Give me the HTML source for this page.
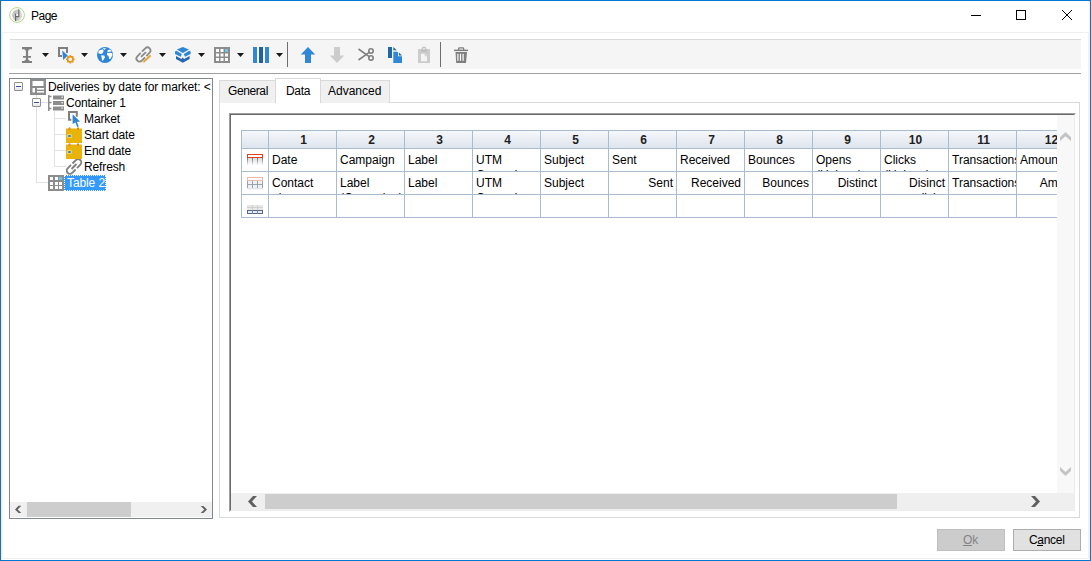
<!DOCTYPE html>
<html><head><meta charset="utf-8">
<style>
*{box-sizing:border-box}
html,body{margin:0;padding:0}
body{width:1091px;height:561px;position:relative;overflow:hidden;background:#fff;font-family:"Liberation Sans",sans-serif;font-size:12px;color:#000}
.a{position:absolute}
.t{position:absolute;white-space:pre;line-height:16px}
</style></head><body>
<!-- window border -->
<div class="a" style="left:0;top:0;width:1091px;height:1px;background:#0078d4"></div>
<div class="a" style="left:0;top:560px;width:1091px;height:1px;background:#0078d4"></div>
<div class="a" style="left:0;top:0;width:1px;height:561px;background:#2f6a9a"></div>
<div class="a" style="left:1090px;top:0;width:1px;height:561px;background:#1b6fc0"></div>
<!-- body frame -->
<div class="a" style="left:2px;top:32px;width:1087px;height:527px;border:1px solid #f0f0f0;border-left-color:#eef4fa"></div>
<div class="a" style="left:1px;top:1px;width:1px;height:559px;background:#e2f5fc"></div>
<div class="a" style="left:1089px;top:1px;width:1px;height:559px;background:#e8f7fc"></div>

<!-- title -->
<svg class="a" style="left:9px;top:7px" width="16" height="16" viewBox="0 0 16 16">
<circle cx="8" cy="8" r="7.4" fill="#fff" stroke="#b0da80" stroke-width="1"/>
<ellipse cx="8" cy="8.2" rx="4.8" ry="5.8" fill="#c6c6c6"/>
<path d="M8 2.6 A4.8 5.8 0 0 1 12.8 8.2 A4.8 5.8 0 0 1 10 13.5 Z" fill="#d8d8d8"/>
<rect x="7" y="6.8" width="2.4" height="2.4" fill="#fff"/>
<path d="M9.8 2.2 V9.6 H6.8 M6.6 6.4 V14" fill="none" stroke="#6b6b6b" stroke-width="1.2"/>
</svg>
<div class="t" style="left:31px;top:8px;letter-spacing:-0.5px">Page</div>
<div class="a" style="left:971px;top:15px;width:10px;height:1px;background:#000"></div>
<div class="a" style="left:1016px;top:10px;width:10px;height:10px;border:1px solid #000"></div>
<svg class="a" style="left:1061px;top:9px" width="12" height="12" viewBox="0 0 12 12"><path d="M1 1 L11 11 M11 1 L1 11" stroke="#000" stroke-width="1"/></svg>

<!-- toolbar -->
<div class="a" style="left:10px;top:39px;width:1071px;height:30px;background:#f5f5f5;border-top:1px solid #dadada"></div>
<!--TOOLBAR-->
<svg class="a" style="left:0;top:0" width="480" height="70" viewBox="0 0 480 70">
<!-- I-beam -->
<g fill="#7f7f7f">
<path d="M22 47 H32 V49.3 H30.2 Q28.4 49.5 28.1 51.3 V55.9 H31 V57.7 H28.1 V59 Q28.3 60.7 30.2 60.9 H32 V63 H22 V60.9 H23.8 Q25.7 60.7 25.9 59 V57.7 H23 V55.9 H25.9 V51.3 Q25.6 49.5 23.8 49.3 H22 Z"/>
</g>
<!-- dropdown arrows -->
<g fill="#1a1a1a">
<path d="M42 53 H49 L45.5 57 Z"/>
<path d="M81 53 H88 L84.5 57 Z"/>
<path d="M120 53 H127 L123.5 57 Z"/>
<path d="M159 53 H166 L162.5 57 Z"/>
<path d="M198 53 H205 L201.5 57 Z"/>
<path d="M237 53 H244 L240.5 57 Z"/>
<path d="M276 53 H283 L279.5 57 Z"/>
</g>
<!-- icon 2: select + gear -->
<path d="M62 56 H59 V48 H67 V53" fill="none" stroke="#7f7f7f" stroke-width="2"/>
<path d="M62.2 50.4 L67.8 55.4 L63.2 60 Z" fill="#2f86d6"/>
<g transform="translate(70.3 59.3)">
<circle r="2.7" fill="none" stroke="#e8961a" stroke-width="1.7"/>
<g stroke="#e8961a" stroke-width="1.5" stroke-linecap="butt">
<path d="M0 -4.3 V-2.5 M0 2.5 V4.3 M-4.3 0 H-2.5 M2.5 0 H4.3 M-3 -3 L-1.8 -1.8 M3 3 L1.8 1.8 M-3 3 L-1.8 1.8 M3 -3 L1.8 -1.8"/>
</g>
</g>
<!-- globe -->
<circle cx="105" cy="55" r="8" fill="#2f86d6"/>
<g fill="#fff">
<path d="M102.7 48.2 L106 48.2 L104.4 49.9 Z"/>
<path d="M98.8 50.4 L102.7 49.3 L103.7 51 L102.6 53.2 L100.9 54.1 L98.2 53.3 Z"/>
<path d="M101.2 55.2 L104.2 55.5 L105 57.3 L103.3 60.1 L102.4 60.9 L101.6 58 Z"/>
<path d="M107.5 50.2 L110.3 49.6 L111.7 51.6 L107.7 52 Z"/>
<path d="M106.9 52.8 L111.9 53.1 L112.6 55 L110.3 59.1 L109.3 59.1 L108.5 55.9 L107.1 55 Z"/>
</g>
<!-- link + pencil -->
<g transform="rotate(-45 143.5 54.5)" fill="none" stroke="#8a8a8a" stroke-width="1.8">
<path d="M142.6 51.4 H137.9 A3.1 3.1 0 0 0 137.9 57.6 H142.6"/>
<path d="M144.4 51.4 H149.1 A3.1 3.1 0 0 1 149.1 57.6 H144.4"/>
<path d="M140 54.5 H147"/>
</g>
<path d="M143.4 62 L150.6 55.4" stroke="#eba030" stroke-width="1.9"/>
<path d="M142.6 62.8 L143.6 61.8" stroke="#f6d49a" stroke-width="1.5"/>
<!-- box -->
<g fill="#2f86d6">
<path d="M176.8 49.6 L182.8 46.9 L189 49.6 L182.8 52.9 Z"/>
<path d="M175 51.5 L176.4 50.8 L181.8 54 L180.6 56.8 L175 53.9 Z"/>
<path d="M190.6 51.5 L189.2 50.8 L183.8 54 L185 56.8 L190.6 53.9 Z"/>
</g>
<path d="M176 56 L181.5 58.9 L182.8 57.4 L184.1 58.9 L189.6 56 V59 L182.8 62.8 L176 59 Z" fill="#2468b2"/>
<!-- grid icon -->
<rect x="214" y="47" width="16" height="16" fill="#8c8c8c"/>
<g fill="#fff">
<rect x="216" y="49" width="3" height="3"/><rect x="220.5" y="49" width="3" height="3"/>
<rect x="216" y="53.5" width="3" height="3"/><rect x="220.5" y="53.5" width="3" height="3"/><rect x="225" y="53.5" width="3" height="3"/>
<rect x="216" y="58" width="3" height="3"/><rect x="220.5" y="58" width="3" height="3"/><rect x="225" y="58" width="3" height="3"/>
</g>
<rect x="225" y="49" width="3" height="3" fill="#6cc3ec"/>
<!-- columns -->
<rect x="253" y="47" width="4" height="16" fill="#3087d5"/>
<rect x="259" y="47" width="4" height="16" fill="#23609f"/>
<rect x="265" y="47" width="4" height="16" fill="#3087d5"/>
<!-- separators -->
<rect x="287" y="42" width="1" height="25" fill="#6d6d6d"/>
<rect x="440" y="42" width="1" height="25" fill="#6d6d6d"/>
<!-- up arrow -->
<path d="M308 47 L315.2 54.5 H311 V63 H305 V54.5 H300.8 Z" fill="#3087d5"/>
<!-- down arrow -->
<path d="M337 63 L344.2 55.5 H340 V47 H334 V55.5 H329.8 Z" fill="#cccccc"/>
<!-- scissors -->
<g fill="none" stroke="#7f7f7f" stroke-width="1.6">
<circle cx="371" cy="51" r="2.2"/>
<circle cx="371" cy="58" r="2.2"/>
<path d="M358.5 49 L369.2 56.6 M358.5 60 L369.2 52.4"/>
</g>
<!-- copy -->
<rect x="388" y="47" width="4" height="11" fill="#2265a8"/>
<path d="M393.3 47 L396.8 50.3 H393.3 Z" fill="#2265a8"/>
<rect x="393.3" y="50.3" width="3.5" height="1.7" fill="#b4d8f4"/>
<path d="M393.3 52 H398 V56.2 H402 V63 H393.3 Z" fill="#3087d5"/>
<path d="M398.9 52.4 L402 55.4 H398.9 Z" fill="#2468b0"/>
<!-- paste disabled -->
<rect x="418" y="49" width="12" height="14" fill="#cccccc"/>
<path d="M422.3 50 V48.8 Q422.3 47.3 424 47.3 Q425.7 47.3 425.7 48.8 V50" fill="none" stroke="#c6c6c6" stroke-width="1.5"/>
<rect x="420.8" y="50" width="6.2" height="1.8" fill="#bdbdbd"/>
<path d="M421 53.8 H425 L427 55.8 V61.3 H421 Z" fill="#f4f4f4"/>
<path d="M425 53.8 V55.8 H427" fill="none" stroke="#cccccc" stroke-width="0.8"/>
<!-- trash -->
<g fill="#7f7f7f">
<path d="M458 50 V48.6 Q458 47.2 459.5 47.2 H462.8 Q464.3 47.2 464.3 48.6 V50 H462.9 V48.6 H459.4 V50 Z"/>
<rect x="454" y="49.6" width="14" height="1.5"/>
<path d="M455.5 52 H467 L466 63 H456.2 Z"/>
</g>
<g fill="#fff">
<rect x="457.3" y="53.8" width="1.2" height="7"/>
<rect x="459.9" y="53.8" width="1.2" height="7"/>
<rect x="462.5" y="53.8" width="1.2" height="7"/>
</g>
</svg>

<!--/TOOLBAR-->
<!-- separator -->
<div class="a" style="left:9px;top:73px;width:1072px;height:1px;background:#a0a0a0"></div>

<!-- tree panel -->
<div class="a" style="left:9px;top:78px;width:204px;height:441px;border:1px solid #828790;background:#fff"></div>
<!-- tree hscroll -->
<div class="a" style="left:10px;top:502px;width:202px;height:15px;background:#f0f0f0"></div>
<div class="a" style="left:27px;top:502px;width:104px;height:15px;background:#cdcdcd"></div>
<!--TREE-->
<!-- tree lines -->
<div class="a" style="left:36px;top:95px;width:1px;height:88px;background:#e2e2e2"></div>
<div class="a" style="left:37px;top:182px;width:11px;height:1px;background:#e2e2e2"></div>
<div class="a" style="left:41px;top:102px;width:7px;height:1px;background:#e2e2e2"></div>
<div class="a" style="left:54px;top:111px;width:1px;height:56px;background:#e2e2e2"></div>
<div class="a" style="left:55px;top:118px;width:11px;height:1px;background:#e2e2e2"></div>
<div class="a" style="left:55px;top:134px;width:11px;height:1px;background:#e2e2e2"></div>
<div class="a" style="left:55px;top:150px;width:11px;height:1px;background:#e2e2e2"></div>
<div class="a" style="left:55px;top:166px;width:11px;height:1px;background:#e2e2e2"></div>
<!-- expanders -->
<div class="a" style="left:14px;top:82px;width:9px;height:9px;border:1px solid #8e8f8f;border-radius:1px;background:linear-gradient(#fff 40%,#e4e4e4)"></div>
<div class="a" style="left:16px;top:86px;width:5px;height:1px;background:#3a4f9e"></div>
<div class="a" style="left:32px;top:98px;width:9px;height:9px;border:1px solid #8e8f8f;border-radius:1px;background:linear-gradient(#fff 40%,#e4e4e4)"></div>
<div class="a" style="left:34px;top:102px;width:5px;height:1px;background:#3a4f9e"></div>
<!-- icon 1: layout -->
<svg class="a" style="left:30px;top:79px" width="16" height="16" viewBox="0 0 16 16">
<rect x="0" y="0" width="16" height="16" fill="#8c8c8c"/>
<rect x="2.5" y="2" width="11" height="5" fill="#fff"/>
<rect x="2.5" y="9" width="2.5" height="4.5" fill="#fff"/>
<rect x="7" y="9" width="7" height="1.6" fill="#fff"/>
<rect x="7" y="12" width="7" height="1.6" fill="#fff"/>
</svg>
<div class="t" style="left:48px;top:79px;letter-spacing:-0.12px">Deliveries by date for market: &lt;</div>
<!-- icon 2: container -->
<svg class="a" style="left:48px;top:95px" width="16" height="16" viewBox="0 0 16 16">
<path d="M0.75 0 V16 M0.75 1.5 H3.5 M0.75 7.5 H3.5 M0.75 13.5 H3.5" stroke="#8c8c8c" stroke-width="1.5" fill="none"/>
<rect x="5" y="0.5" width="11" height="4" fill="#8c8c8c"/>
<rect x="5" y="6" width="11" height="4" fill="#8c8c8c"/>
<rect x="5" y="11.5" width="11" height="4" fill="#8c8c8c"/>
<rect x="13.5" y="1.5" width="1.3" height="1.3" fill="#fff"/>
<rect x="13.5" y="7" width="1.3" height="1.3" fill="#fff"/>
<rect x="13.5" y="12.5" width="1.3" height="1.3" fill="#fff"/>
</svg>
<div class="t" style="left:66px;top:95px;letter-spacing:-0.2px">Container 1</div>
<!-- icon 3: market -->
<svg class="a" style="left:66px;top:111px" width="16" height="16" viewBox="0 0 16 16">
<path d="M5.3 8.8 H3 V1 H10.8 V5.8" stroke="#7f7f7f" stroke-width="2" fill="none"/>
<path d="M6.6 3.2 L14 10.6 L10.9 10.9 L12.7 15.4 L11.2 16 L9.4 11.5 L6.6 13 Z" fill="#2f86d6"/>
</svg>
<div class="t" style="left:84px;top:111px;letter-spacing:-0.12px">Market</div>
<!-- icon 4,5: calendar -->
<svg class="a" style="left:66px;top:127px" width="16" height="16" viewBox="0 0 16 16">
<rect x="0" y="1.5" width="16" height="14.5" fill="#e8b40a"/>
<rect x="2.5" y="0.3" width="2" height="2.7" rx="1" fill="#d98b1c"/>
<rect x="11" y="0.3" width="2" height="2.7" rx="1" fill="#d98b1c"/>
<rect x="1.5" y="7.3" width="4" height="3.4" fill="#f5e6b0"/>
<rect x="2.3" y="8" width="2.4" height="2" fill="#2c7fc4"/>
</svg>
<div class="t" style="left:84px;top:127px;letter-spacing:-0.12px">Start date</div>
<svg class="a" style="left:66px;top:143px" width="16" height="16" viewBox="0 0 16 16">
<rect x="0" y="1.5" width="16" height="14.5" fill="#e8b40a"/>
<rect x="2.5" y="0.3" width="2" height="2.7" rx="1" fill="#d98b1c"/>
<rect x="11" y="0.3" width="2" height="2.7" rx="1" fill="#d98b1c"/>
<rect x="1.5" y="7.3" width="4" height="3.4" fill="#f5e6b0"/>
<rect x="2.3" y="8" width="2.4" height="2" fill="#2c7fc4"/>
</svg>
<div class="t" style="left:84px;top:143px;letter-spacing:-0.12px">End date</div>
<!-- icon 6: link -->
<svg class="a" style="left:66px;top:159px" width="16" height="16" viewBox="0 0 16 16">
<g transform="rotate(-45 8 7.5)" fill="none" stroke="#7f7f7f" stroke-width="1.9">
<path d="M7 4.3 H2.2 A3.2 3.2 0 0 0 2.2 10.7 H7"/>
<path d="M9 4.3 H13.8 A3.2 3.2 0 0 1 13.8 10.7 H9"/>
<path d="M4.5 7.5 H11.5"/>
</g>
</svg>
<div class="t" style="left:84px;top:159px;letter-spacing:-0.12px">Refresh</div>
<!-- icon 7: table -->
<svg class="a" style="left:48px;top:175px" width="16" height="16" viewBox="0 0 16 16">
<rect x="0" y="0" width="16" height="16" fill="#8c8c8c"/>
<g fill="#fff">
<rect x="2" y="2" width="3" height="3"/><rect x="7" y="2" width="3" height="3"/>
<rect x="2" y="7" width="3" height="3"/><rect x="7" y="7" width="3" height="3"/><rect x="11" y="7" width="3" height="3"/>
<rect x="2" y="11" width="3" height="3"/><rect x="7" y="11" width="3" height="3"/><rect x="11" y="11" width="3" height="3"/>
</g>
<rect x="11" y="2" width="3" height="3" fill="#6cc3ec"/>
</svg>
<div class="a" style="left:64px;top:175px;width:42px;height:16px;background:#3399ff;border:1px dotted #fff"></div>
<div class="t" style="left:67px;top:175px;color:#fff;letter-spacing:-0.1px">Table 2</div>
<!-- tree hscroll arrows -->



<!--/TREE-->

<!-- tabs -->
<div class="a" style="left:219px;top:102px;width:861px;height:416px;border:1px solid #d9d9d9;background:#fff"></div>
<div class="a" style="left:219px;top:80px;width:57px;height:23px;border:1px solid #d9d9d9;border-bottom:none;background:#f0f0f0"></div>
<div class="a" style="left:320px;top:80px;width:70px;height:23px;border:1px solid #d9d9d9;border-bottom:none;background:#f0f0f0"></div>
<div class="a" style="left:275px;top:78px;width:46px;height:25px;border:1px solid #d9d9d9;border-bottom:none;background:#fff"></div>
<div class="t" style="left:228px;top:83px;letter-spacing:-0.4px">General</div>
<div class="t" style="left:286px;top:83px;letter-spacing:-0.3px">Data</div>
<div class="t" style="left:328px;top:83px">Advanced</div>

<!-- grid frame -->
<div class="a" style="left:229px;top:113px;width:847px;height:399px;border:1px solid #fff;border-top-color:#a0a0a0;border-left-color:#a0a0a0"></div>
<div class="a" style="left:230px;top:114px;width:845px;height:397px;border:1px solid #ececec;border-top-color:#696969;border-left-color:#696969"></div>
<!--GRID-->
<div class="a" style="left:231px;top:115px;width:826px;height:378px;overflow:hidden">
<div class="a" style="left:10px;top:15px;width:844px;height:19px;background:linear-gradient(#f6f8fb,#dde4ed)"></div>
<div class="a" style="left:10px;top:15px;width:844px;height:1px;background:#a8bbcf"></div>
<div class="a" style="left:10px;top:33px;width:844px;height:1px;background:#a8bbcf"></div>
<div class="a" style="left:10px;top:56px;width:844px;height:1px;background:#a8bbcf"></div>
<div class="a" style="left:10px;top:79px;width:844px;height:1px;background:#a8bbcf"></div>
<div class="a" style="left:10px;top:102px;width:844px;height:1px;background:#a8bbcf"></div>
<div class="a" style="left:10px;top:15px;width:1px;height:88px;background:#a8bbcf"></div>
<div class="a" style="left:37px;top:15px;width:1px;height:88px;background:#a8bbcf"></div>
<div class="a" style="left:105px;top:15px;width:1px;height:88px;background:#a8bbcf"></div>
<div class="a" style="left:173px;top:15px;width:1px;height:88px;background:#a8bbcf"></div>
<div class="a" style="left:241px;top:15px;width:1px;height:88px;background:#a8bbcf"></div>
<div class="a" style="left:309px;top:15px;width:1px;height:88px;background:#a8bbcf"></div>
<div class="a" style="left:377px;top:15px;width:1px;height:88px;background:#a8bbcf"></div>
<div class="a" style="left:445px;top:15px;width:1px;height:88px;background:#a8bbcf"></div>
<div class="a" style="left:513px;top:15px;width:1px;height:88px;background:#a8bbcf"></div>
<div class="a" style="left:581px;top:15px;width:1px;height:88px;background:#a8bbcf"></div>
<div class="a" style="left:649px;top:15px;width:1px;height:88px;background:#a8bbcf"></div>
<div class="a" style="left:717px;top:15px;width:1px;height:88px;background:#a8bbcf"></div>
<div class="a" style="left:785px;top:15px;width:1px;height:88px;background:#a8bbcf"></div>
<div class="a" style="left:853px;top:15px;width:1px;height:88px;background:#a8bbcf"></div>
<div class="t" style="left:39px;top:17px;width:67px;text-align:center;font-weight:bold;color:#1e1e1e">1</div>
<div class="t" style="left:107px;top:17px;width:67px;text-align:center;font-weight:bold;color:#1e1e1e">2</div>
<div class="t" style="left:175px;top:17px;width:67px;text-align:center;font-weight:bold;color:#1e1e1e">3</div>
<div class="t" style="left:243px;top:17px;width:67px;text-align:center;font-weight:bold;color:#1e1e1e">4</div>
<div class="t" style="left:311px;top:17px;width:67px;text-align:center;font-weight:bold;color:#1e1e1e">5</div>
<div class="t" style="left:379px;top:17px;width:67px;text-align:center;font-weight:bold;color:#1e1e1e">6</div>
<div class="t" style="left:447px;top:17px;width:67px;text-align:center;font-weight:bold;color:#1e1e1e">7</div>
<div class="t" style="left:515px;top:17px;width:67px;text-align:center;font-weight:bold;color:#1e1e1e">8</div>
<div class="t" style="left:583px;top:17px;width:67px;text-align:center;font-weight:bold;color:#1e1e1e">9</div>
<div class="t" style="left:651px;top:17px;width:67px;text-align:center;font-weight:bold;color:#1e1e1e">10</div>
<div class="t" style="left:719px;top:17px;width:67px;text-align:center;font-weight:bold;color:#1e1e1e">11</div>
<div class="t" style="left:787px;top:17px;width:67px;text-align:center;font-weight:bold;color:#1e1e1e">12</div>
<div class="a" style="left:38px;top:34px;width:67px;height:22px;overflow:hidden"><div class="t" style="left:3px;top:4px;width:61px;white-space:pre-wrap;line-height:15px;text-align:left">Date</div></div>
<div class="a" style="left:38px;top:57px;width:67px;height:22px;overflow:hidden"><div class="t" style="left:3px;top:4px;width:61px;white-space:pre-wrap;line-height:15px;text-align:left">Contact
ai</div></div>
<div class="a" style="left:106px;top:34px;width:67px;height:22px;overflow:hidden"><div class="t" style="left:3px;top:4px;width:61px;white-space:pre-wrap;line-height:15px;text-align:left">Campaign</div></div>
<div class="a" style="left:106px;top:57px;width:67px;height:22px;overflow:hidden"><div class="t" style="left:3px;top:4px;width:61px;white-space:pre-wrap;line-height:15px;text-align:left">Label
(Campaign)</div></div>
<div class="a" style="left:174px;top:34px;width:67px;height:22px;overflow:hidden"><div class="t" style="left:3px;top:4px;width:61px;white-space:pre-wrap;line-height:15px;text-align:left">Label</div></div>
<div class="a" style="left:174px;top:57px;width:67px;height:22px;overflow:hidden"><div class="t" style="left:3px;top:4px;width:61px;white-space:pre-wrap;line-height:15px;text-align:left">Label</div></div>
<div class="a" style="left:242px;top:34px;width:67px;height:22px;overflow:hidden"><div class="t" style="left:3px;top:4px;width:61px;white-space:pre-wrap;line-height:15px;text-align:left">UTM
Campaign</div></div>
<div class="a" style="left:242px;top:57px;width:67px;height:22px;overflow:hidden"><div class="t" style="left:3px;top:4px;width:61px;white-space:pre-wrap;line-height:15px;text-align:left">UTM
Campaign</div></div>
<div class="a" style="left:310px;top:34px;width:67px;height:22px;overflow:hidden"><div class="t" style="left:3px;top:4px;width:61px;white-space:pre-wrap;line-height:15px;text-align:left">Subject</div></div>
<div class="a" style="left:310px;top:57px;width:67px;height:22px;overflow:hidden"><div class="t" style="left:3px;top:4px;width:61px;white-space:pre-wrap;line-height:15px;text-align:left">Subject</div></div>
<div class="a" style="left:378px;top:34px;width:67px;height:22px;overflow:hidden"><div class="t" style="left:3px;top:4px;width:61px;white-space:pre-wrap;line-height:15px;text-align:left">Sent</div></div>
<div class="a" style="left:378px;top:57px;width:67px;height:22px;overflow:hidden"><div class="t" style="left:3px;top:4px;width:61px;white-space:pre-wrap;line-height:15px;text-align:right">Sent</div></div>
<div class="a" style="left:446px;top:34px;width:67px;height:22px;overflow:hidden"><div class="t" style="left:3px;top:4px;width:61px;white-space:pre-wrap;line-height:15px;text-align:left">Received</div></div>
<div class="a" style="left:446px;top:57px;width:67px;height:22px;overflow:hidden"><div class="t" style="left:3px;top:4px;width:61px;white-space:pre-wrap;line-height:15px;text-align:right">Received</div></div>
<div class="a" style="left:514px;top:34px;width:67px;height:22px;overflow:hidden"><div class="t" style="left:3px;top:4px;width:61px;white-space:pre-wrap;line-height:15px;text-align:left">Bounces</div></div>
<div class="a" style="left:514px;top:57px;width:67px;height:22px;overflow:hidden"><div class="t" style="left:3px;top:4px;width:61px;white-space:pre-wrap;line-height:15px;text-align:right">Bounces</div></div>
<div class="a" style="left:582px;top:34px;width:67px;height:22px;overflow:hidden"><div class="t" style="left:3px;top:4px;width:61px;white-space:pre-wrap;line-height:15px;text-align:left">Opens
(Unique)</div></div>
<div class="a" style="left:582px;top:57px;width:67px;height:22px;overflow:hidden"><div class="t" style="left:3px;top:4px;width:61px;white-space:pre-wrap;line-height:15px;text-align:right">Distinct
opens</div></div>
<div class="a" style="left:650px;top:34px;width:67px;height:22px;overflow:hidden"><div class="t" style="left:3px;top:4px;width:61px;white-space:pre-wrap;line-height:15px;text-align:left">Clicks
(Unique)</div></div>
<div class="a" style="left:650px;top:57px;width:67px;height:22px;overflow:hidden"><div class="t" style="left:3px;top:4px;width:61px;white-space:pre-wrap;line-height:15px;text-align:right">Disinct
clicks</div></div>
<div class="a" style="left:718px;top:34px;width:67px;height:22px;overflow:hidden"><div class="t" style="left:3px;top:4px;width:61px;white-space:pre-wrap;line-height:15px;text-align:left">Transactions</div></div>
<div class="a" style="left:718px;top:57px;width:67px;height:22px;overflow:hidden"><div class="t" style="left:3px;top:4px;width:61px;white-space:pre-wrap;line-height:15px;text-align:left">Transactions</div></div>
<div class="a" style="left:786px;top:34px;width:67px;height:22px;overflow:hidden"><div class="t" style="left:3px;top:4px;width:61px;white-space:pre-wrap;line-height:15px;text-align:left">Amount</div></div>
<div class="a" style="left:786px;top:57px;width:67px;height:22px;overflow:hidden"><div class="t" style="left:3px;top:4px;width:61px;white-space:pre-wrap;line-height:15px;text-align:right">Amount</div></div>
<svg class="a" style="left:0;top:0" width="40" height="120" viewBox="231 115 40 120">
<!-- row1 icon: red header -->
<defs>
<linearGradient id="fade" x1="0" y1="0" x2="0" y2="1"><stop offset="0" stop-color="#dcdcdc"/><stop offset="1" stop-color="#fff"/></linearGradient>
<linearGradient id="fadeline" x1="0" y1="0" x2="0" y2="1"><stop offset="0" stop-color="#6a7480"/><stop offset="1" stop-color="#f0f0f0"/></linearGradient>
</defs>
<rect x="247" y="158" width="16" height="7" fill="url(#fade)"/>
<g fill="url(#fadeline)">
<rect x="247" y="158" width="1" height="7"/><rect x="252" y="158" width="1" height="7"/><rect x="257" y="158" width="1" height="7"/><rect x="262" y="158" width="1" height="7"/>
</g>
<rect x="247.5" y="154.5" width="15" height="3" fill="#fff" stroke="#e0401a" stroke-width="1"/>
<!-- row2 icon -->
<rect x="247.5" y="177.5" width="15" height="3" fill="#fff" stroke="#f0b8a8" stroke-width="1"/>
<rect x="247" y="181" width="16" height="7" fill="#eef1f6"/>
<g fill="#9aa3ae">
<rect x="247" y="181" width="1" height="7"/><rect x="252" y="181" width="1" height="7"/><rect x="257" y="181" width="1" height="7"/><rect x="262" y="181" width="1" height="7"/>
<rect x="247" y="184" width="16" height="1"/>
</g>
<rect x="247" y="188" width="16" height="2" fill="url(#fade)"/>
<!-- row3 icon -->
<rect x="247" y="205" width="16" height="5" fill="#e8e8e8"/>
<g fill="#d0d0d0">
<rect x="252" y="205" width="1" height="5"/><rect x="257" y="205" width="1" height="5"/><rect x="247" y="207" width="16" height="1"/>
</g>
<rect x="247.5" y="210.5" width="15" height="3" fill="#e4ecf8" stroke="#5a6680" stroke-width="1"/>
<rect x="252" y="210" width="1" height="4" fill="#7a86a0"/><rect x="257" y="210" width="1" height="4" fill="#7a86a0"/>
</svg>

</div>
<div class="a" style="left:1057px;top:115px;width:17px;height:378px;background:#f8f8f8"></div>


<div class="a" style="left:231px;top:493px;width:843px;height:17px;background:#efefef"></div>
<div class="a" style="left:265px;top:494px;width:632px;height:15px;background:#cdcdcd"></div>


<svg class="a" style="left:0;top:0" width="1091" height="561" viewBox="0 0 1091 561"><path d="M1060 137.2 L1065.5 132 L1071 137.2 L1071 141 L1065.5 136.2 L1060 141 Z M1060 467 L1065.5 472 L1071 467 L1071 470.8 L1065.5 476 L1060 470.8 Z" fill="#c4c4c4"/><path d="M257 496 L253 496 L248 501.5 L253 507 L257 507 L252 501.5 Z M1031 496 L1035 496 L1040 501.5 L1035 507 L1031 507 L1036 501.5 Z M21.3 505.8 L18.6 505.8 L15 509.4 L18.6 513 L21.3 513 L17.7 509.4 Z M200.7 506 L203.4 506 L207 509.5 L203.4 513 L200.7 513 L204.3 509.5 Z" fill="#606060"/></svg>
<!--/GRID-->

<!-- buttons -->
<div class="a" style="left:937px;top:529px;width:68px;height:22px;border:1px solid #bfbfbf;background:#cccccc"></div>
<div class="t" style="left:963px;top:532px;color:#838383">Ok</div>
<div class="a" style="left:1013px;top:529px;width:68px;height:22px;border:1px solid #adadad;background:#e1e1e1"></div>
<div class="t" style="left:1029px;top:532px;letter-spacing:-0.3px">Cancel</div>
<div class="a" style="left:1037px;top:545px;width:6px;height:1px;background:#000"></div>
<div class="a" style="left:963px;top:545px;width:9px;height:1px;background:#838383"></div>
</body></html>
